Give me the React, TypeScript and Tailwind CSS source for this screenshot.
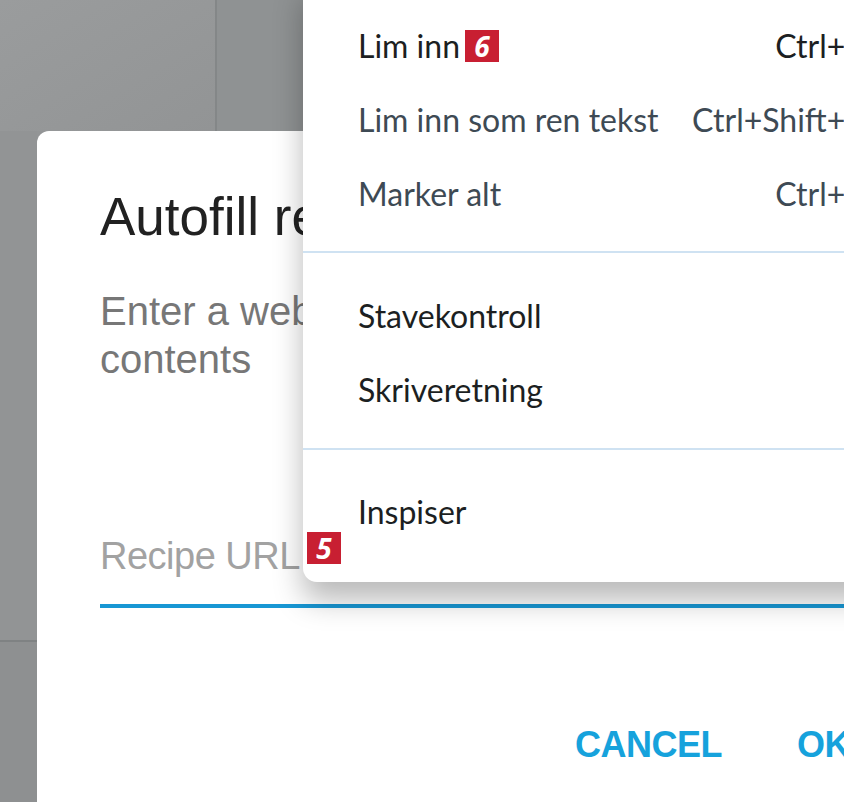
import React from 'react';

const menuFont = { fontFamily: 'Lato, "Noto Sans", sans-serif' };

function Badge({ n }: { n: string }) {
  return (
    <span className="inline-flex h-[32px] w-[34px] items-center justify-center bg-[#c81f32] text-[28px] font-bold italic leading-none text-white [font-family:'Open_Sans',sans-serif]">
      {n}
    </span>
  );
}

function MenuItem({ label, shortcut, badge, sub, muted }: { label: string; shortcut?: string; badge?: string; sub?: boolean; muted?: boolean }) {
  const tone = muted ? 'text-[#3e4a54]' : 'text-[#1c1f22]';
  return (
    <div className="flex h-[74px] items-center pl-[55px] pr-[36px]">
      <div className="flex flex-1 items-center gap-[5px]">
        <span className={tone}>{label}</span>
        {badge && <Badge n={badge} />}
      </div>
      {shortcut && <span className={tone}>{shortcut}</span>}
      {sub && <span className="mr-[14px] text-[#c8c8c8]">›</span>}
    </div>
  );
}

export default function App() {
  return (
    <div className="relative h-[802px] w-[844px] overflow-hidden bg-[#939596] [font-family:'Liberation_Sans',Arial,sans-serif]">
      <div className="grid h-full grid-cols-[37px_1fr] grid-rows-[131px_1fr]">
        {/* background app behind the dialog */}
        <div className="col-span-2 flex">
          <div className="w-[217px] border-r-2 border-[#848788] bg-gradient-to-br from-[#9a9c9d] to-[#929495]" />
          <div className="flex-1 bg-[#8f9293]" />
        </div>
        <div className="flex flex-col">
          <div className="h-[511px] border-b-2 border-[#7f8283] bg-[#929495]" />
          <div className="flex-1 bg-[#8e9091]" />
        </div>

        {/* dialog */}
        <div className="rounded-tl-[12px] bg-white pl-[63px] pt-[54px]">
          <div className="text-[53px] leading-[64px] text-[#212121]">Autofill recipe</div>
          <div className="mt-[38px] whitespace-nowrap text-[40px] leading-[48px] text-[#777]">
            Enter a website address to load the recipe
            <br />
            contents
          </div>
          <div className="mt-[151px] text-[38px] leading-[44px] tracking-[-0.5px] text-[#a2a2a2]">Recipe URL</div>
          <div className="mt-[26px] h-[4px] bg-[#1897d4]" />
          <div className="mt-[115px] flex gap-[75px] pl-[475px] text-[36px] font-semibold leading-[44px] tracking-[-0.5px] text-[#16a2dc]">
            <span>CANCEL</span>
            <span>OK</span>
          </div>
        </div>
      </div>

      {/* context menu */}
      <div
        style={menuFont}
        className="absolute left-[303px] top-[-20px] w-[600px] rounded-bl-[14px] bg-white pb-[33px] pt-[29px] text-[32px] shadow-[0_18px_30px_rgba(0,0,0,0.28)]"
      >
        <MenuItem label="Lim inn" shortcut="Ctrl+V" badge="6" />
        <MenuItem label="Lim inn som ren tekst" shortcut="Ctrl+Shift+V" muted />
        <MenuItem label="Marker alt" shortcut="Ctrl+A" muted />
        <div className="mb-[26px] mt-[20px] h-[2px] bg-[#cfe2f2]" />
        <MenuItem label="Stavekontroll" sub />
        <MenuItem label="Skriveretning" sub />
        <div className="mb-[25px] mt-[21px] h-[2px] bg-[#cfe2f2]" />
        <MenuItem label="Inspiser" />
        <div className="absolute bottom-[11px] left-[4px]">
          <Badge n="5" />
        </div>
      </div>
    </div>
  );
}
